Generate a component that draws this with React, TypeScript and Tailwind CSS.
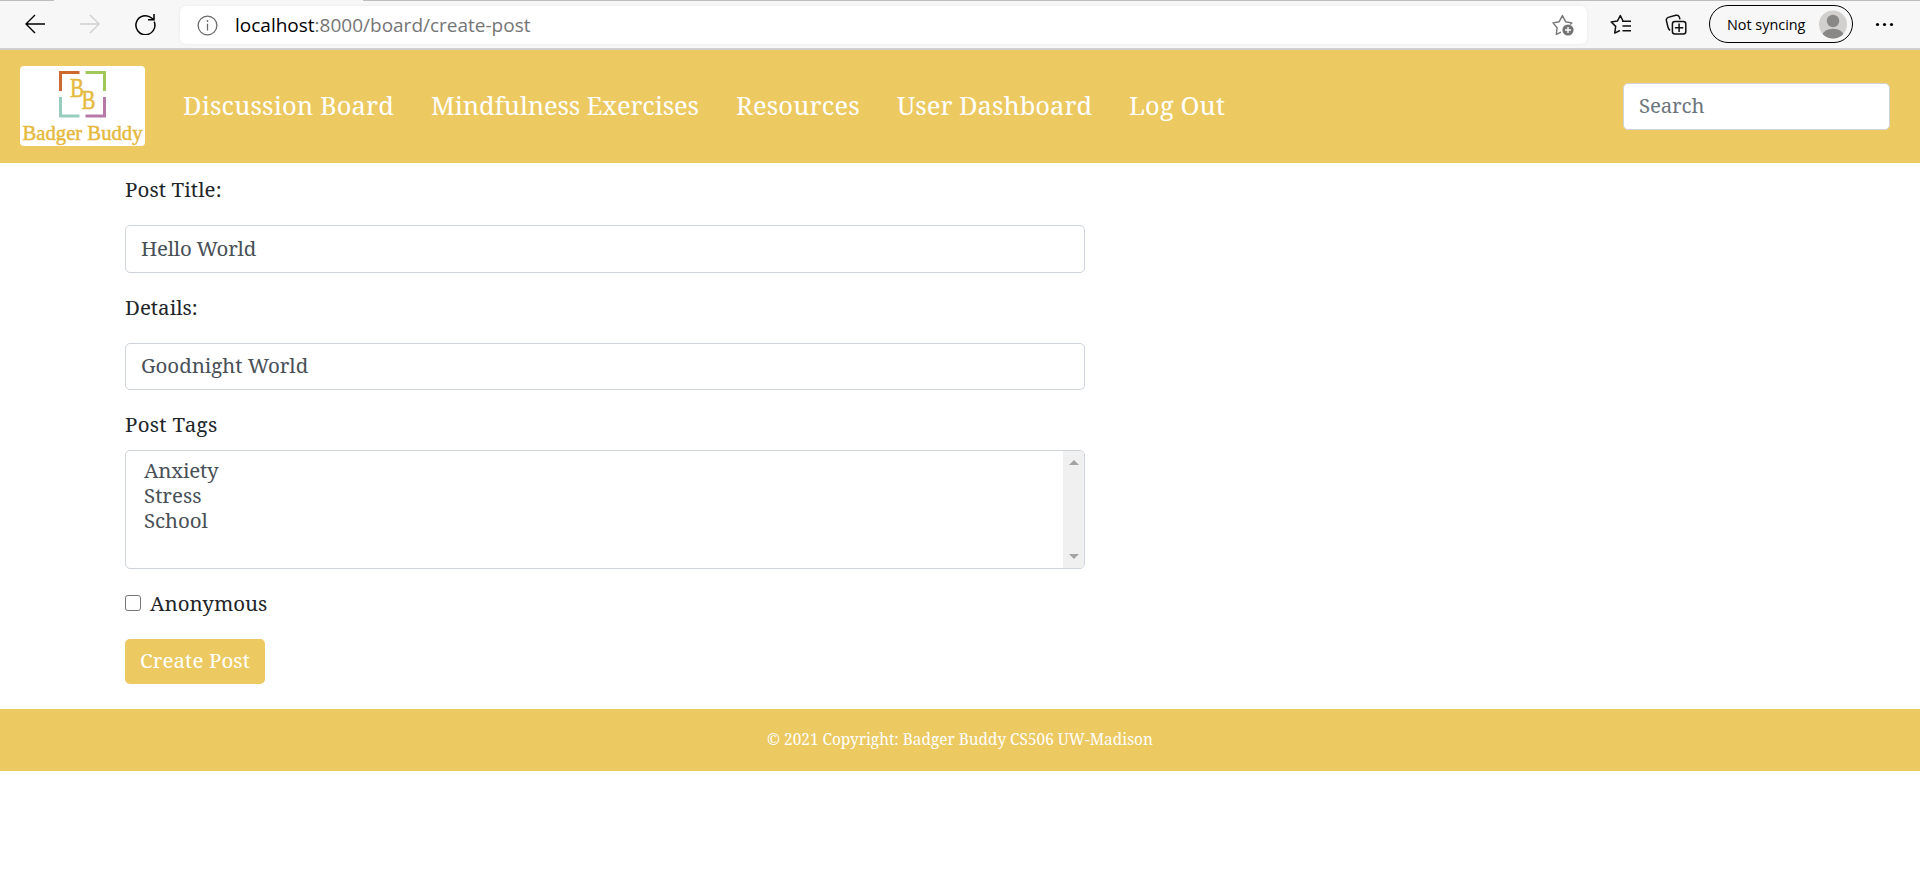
import React from 'react';

function BackIcon() {
  return (
    <svg width="22" height="22" viewBox="0 0 22 22" fill="none" stroke="currentColor" strokeWidth="1.4">
      <path d="M21 11H2M11 2L2 11l9 9" />
    </svg>
  );
}

function ReloadIcon() {
  return (
    <svg width="22" height="22" viewBox="0 0 22 22" fill="none" stroke="currentColor" strokeWidth="1.5">
      <path d="M20.2 8.6A9.5 9.5 0 1 1 17.6 5L19.6 6.6M20 1v5.8h-6" />
    </svg>
  );
}

function InfoIcon() {
  return (
    <svg width="21" height="21" viewBox="0 0 21 21" fill="none" stroke="#6b6b6b" strokeWidth="1.3">
      <circle cx="10.5" cy="10.5" r="9.4" />
      <path d="M10.5 8.7v6.8" />
      <circle cx="10.5" cy="6" r="0.9" fill="#6b6b6b" stroke="none" />
    </svg>
  );
}

function StarAddIcon() {
  return (
    <svg width="22" height="22" viewBox="0 0 22 22" fill="none" stroke="#777" strokeWidth="1.4" strokeLinejoin="round">
      <path d="M9 18.2L4.3 20.4l.8-6.6L1 8.9l6.2-1.2L10.4 1.6l3.2 6.1 6.2 1.2-1.6 1.6" />
      <circle cx="16" cy="16" r="5.6" fill="#747474" stroke="none" />
      <path d="M16 13v6M13 16h6" stroke="#fff" />
    </svg>
  );
}

function FavoritesIcon() {
  return (
    <svg width="22" height="21" viewBox="0 0 22 21" fill="none" stroke="#111" strokeWidth="1.5" strokeLinejoin="round">
      <path d="M14.5 7.3h-1.3L10.3 1.5 7.4 7.1 1.2 8l4.5 4.4-1 6.7 5.2-2.6M12 7.3h9M12.5 12h8.5M12.5 16.7h8.5" />
    </svg>
  );
}

function CollectionsIcon() {
  return (
    <svg width="22" height="22" viewBox="0 0 22 22" fill="none" stroke="#111" strokeWidth="1.5">
      <rect x="7.4" y="7.4" width="13.4" height="12.6" rx="2.5" />
      <path d="M14.1 9.5v8.5M9.9 13.7h8.4M5.2 16.2C3.6 15.7 3.4 14.8 3 13.2L1.4 6.6C1 4.8 1.6 3.9 3.2 3.4L10.8 1.3c1.9-.4 2.9.2 3.5 1.7l.7 2.4" />
    </svg>
  );
}

function BrowserBar() {
  return (
    <div className="flex h-[50px] items-start border-b-2 border-[#cfcfcf] bg-[#f7f7f7] font-['Open_Sans','Noto_Sans',sans-serif]">
      <div className="absolute top-0 left-0 h-px w-[54px] bg-[#bdbdbd]" />
      <div className="absolute top-0 right-0 h-px w-[1557px] bg-[#bdbdbd]" />
      <div className="flex w-[180px] items-center pt-[13px] pl-6">
        <span className="w-[55px] text-black"><BackIcon /></span>
        <span className="w-[55px] text-[#d0d0d0]"><span className="block w-[22px] rotate-180"><BackIcon /></span></span>
        <span className="text-black"><ReloadIcon /></span>
      </div>
      <div className="mt-[6px] flex h-[38px] w-[1407px] items-center rounded-md bg-white pr-[13px] pl-[17px] shadow-[0_0_3px_#e4e4e4]">
        <InfoIcon />
        <p className="ml-[17px] flex-1 text-[19px] leading-[38px] text-[#757575]">
          <span className="text-black">localhost</span>:8000/board/create-post
        </p>
        <StarAddIcon />
      </div>
      <div className="ml-[23px] w-[55px] pt-[14px]"><FavoritesIcon /></div>
      <div className="w-[44px] pt-[14px]"><CollectionsIcon /></div>
      <div className="mt-[5px] flex h-[38px] w-[144px] items-center justify-between rounded-full border-[1.5px] border-black pr-[4px] pl-[17px]">
        <span className="pt-px text-[14.4px] whitespace-nowrap text-black">Not syncing</span>
        <svg width="29" height="29" viewBox="0 0 29 29">
          <defs>
            <clipPath id="avatar"><circle cx="14" cy="14.5" r="14" /></clipPath>
          </defs>
          <circle cx="14" cy="14.5" r="14" fill="#d2d0ce" />
          <g fill="#8a8886" clipPath="url(#avatar)">
            <circle cx="14" cy="11" r="6.2" />
            <ellipse cx="14" cy="25" rx="10.3" ry="6.3" />
          </g>
        </svg>
      </div>
      <svg className="mt-[22px] ml-[22px]" width="19" height="5" viewBox="0 0 19 5">
        <circle cx="2.5" cy="2.5" r="1.6" /><circle cx="9.5" cy="2.5" r="1.6" /><circle cx="16.5" cy="2.5" r="1.6" />
      </svg>
    </div>
  );
}

function Logo() {
  return (
    <svg className="mt-4 ml-5 shrink-0 rounded bg-white" width="125" height="80" viewBox="0 0 125 80">
      <g fill="none" strokeWidth="3">
        <path d="M59.5 6.5H40.5V25" stroke="#cd692c" />
        <path d="M65.5 6.5H84.5V25" stroke="#a3c85a" />
        <path d="M40.5 31V50H59.5" stroke="#96cdbd" />
        <path d="M84.5 31V50H65.5" stroke="#b77aa8" />
      </g>
      <g fill="#e5b93d" stroke="#e5b93d" strokeWidth=".5" fontFamily="Liberation Serif, serif">
        <text x="50" y="30.5" fontSize="26.5" textLength="14" lengthAdjust="spacingAndGlyphs">B</text>
        <text x="61.5" y="42.5" fontSize="26.5" textLength="14" lengthAdjust="spacingAndGlyphs">B</text>
        <text x="2.5" y="73.5" fontSize="21" textLength="120" lengthAdjust="spacingAndGlyphs">Badger Buddy</text>
      </g>
    </svg>
  );
}

function NavBar() {
  return (
    <nav className="flex h-[113px] bg-[#ecc961] text-white">
      <Logo />
      <div className="ml-[38px] flex pt-[36px] text-[25.5px] leading-[38px] whitespace-nowrap">
        <a className="w-[248px] tracking-[0.1px]">Discussion Board</a>
        <a className="w-[305px] tracking-[-0.15px]">Mindfulness Exercises</a>
        <a className="w-[161px] tracking-[0.15px]">Resources</a>
        <a className="w-[232px]">User Dashboard</a>
        <a className="tracking-[0.15px]">Log Out</a>
      </div>
      <input
        placeholder="Search"
        className="mt-[33px] mr-[30px] ml-auto h-[47px] w-[267px] rounded-[5px] border border-[#ced4da] bg-white px-[15px] pb-[3px] text-[20.5px] tracking-[-0.2px] placeholder:text-[#6c757d]"
      />
    </nav>
  );
}

const field =
  'block w-full shrink-0 rounded-[5px] border border-[#ced4da] bg-white px-[15px] text-[20.5px] text-[#495057]';

function PostForm() {
  return (
    <form className="ml-[125px] flex h-[546px] w-[960px] flex-col items-start pt-[11px] text-[20.5px] leading-[30px] text-[#212529]">
      <label className="tracking-[0.1px]">Post Title:</label>
      <input className={field + ' mt-[21px] h-[48px] pb-[2px] tracking-[-0.25px]'} defaultValue="Hello World" />
      <label className="mt-[19px]">Details:</label>
      <input className={field + ' mt-[21px] h-[47px] pb-[4px] tracking-[-0.05px]'} defaultValue="Goodnight World" />
      <label className="mt-[19px] tracking-[0.3px]">Post Tags</label>
      <div className="mt-[11px] flex h-[119px] w-full shrink-0 overflow-hidden rounded-[5px] border border-[#ced4da] text-[#495057]">
        <ul className="flex-1 pt-[7px] pl-[18px] leading-[25px]">
          <li className="tracking-[-0.2px]">Anxiety</li>
          <li>Stress</li>
          <li className="tracking-[-0.1px]">School</li>
        </ul>
        <div className="flex w-[21px] flex-col items-center justify-between bg-[#f0f0f0] pt-[9px] pb-[9px]">
          <svg width="10" height="5" viewBox="0 0 10 5" fill="#a3a3a3"><path d="M0 5L5 0l5 5z" /></svg>
          <svg width="10" height="5" viewBox="0 0 10 5" fill="#a3a3a3"><path d="M0 0h10L5 5z" /></svg>
        </div>
      </div>
      <label className="mt-[19px] flex">
        <input type="checkbox" className="mt-[7px] mr-[9px] size-4 appearance-none rounded-[3px] border border-[#767676] bg-white" />
        <span>Anonymous</span>
      </label>
      <button type="button" className="mt-[21px] h-[45px] w-[140px] shrink-0 rounded-[5px] bg-[#ecc961] pb-[4px] tracking-[0.1px] text-white">
        Create Post
      </button>
    </form>
  );
}

export default function App() {
  return (
    <div className="relative min-h-[876px] w-full bg-white font-['Noto_Serif','DejaVu_Serif',serif]">
      <BrowserBar />
      <NavBar />
      <PostForm />
      <footer className="h-[62px] bg-[#ecc961] pt-[19px] text-center text-[15.4px] leading-[24px] text-white">
        © 2021 Copyright: Badger Buddy CS506 UW-Madison
      </footer>
    </div>
  );
}
